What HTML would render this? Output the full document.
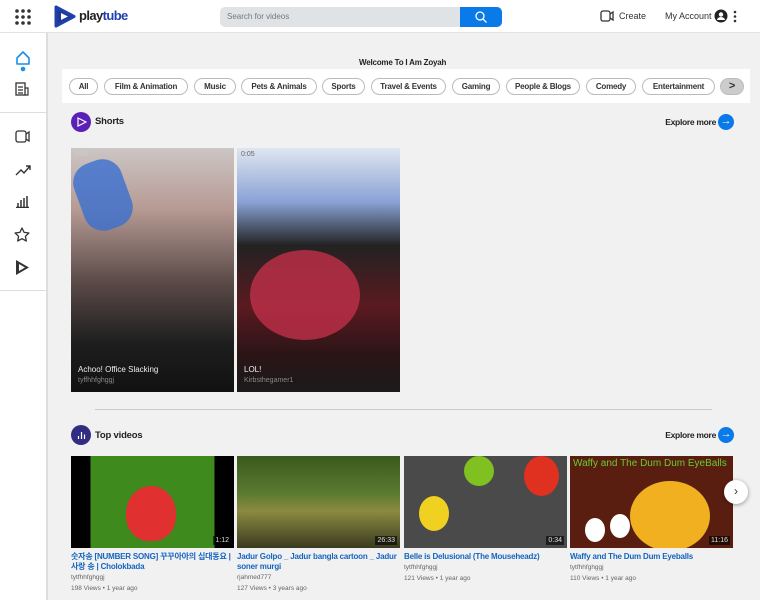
<!DOCTYPE html><html><head><style>
*{margin:0;padding:0;box-sizing:border-box}
body{width:760px;height:600px;overflow:hidden;background:#f1f1f1;font-family:"Liberation Sans","Noto Sans CJK KR",sans-serif;position:relative;color:#222}
.a{position:absolute}
.hdr{left:0;top:0;width:760px;height:33px;background:#fff;border-bottom:1px solid #e2e2e2}
.side{left:0;top:33px;width:48px;height:567px;background:#fff;border-right:2px solid #ddd}
.chip{position:absolute;top:78px;height:17px;border:1px solid #bbb;border-radius:9px;font-size:8px;font-weight:bold;line-height:15px;text-align:center;background:#fff;letter-spacing:-.2px;color:#333}
.t{font-size:8px;font-weight:bold;color:#1565c0;line-height:10px;letter-spacing:-.2px}
.s{font-size:6.5px;color:#666;line-height:11px}
.dur{position:absolute;right:3px;bottom:3px;background:rgba(0,0,0,.6);color:#ddd;font-size:7px;padding:1px 2px}
.ex{position:absolute;width:62px;text-align:right;font-size:8.5px;font-weight:bold;letter-spacing:-.3px;left:654px}
</style></head><body>
<div class="a hdr"></div>
<svg class="a" style="left:15px;top:9px" width="16" height="16"><g fill="#333"><circle cx="2" cy="2" r="1.8"/><circle cx="8" cy="2" r="1.8"/><circle cx="14" cy="2" r="1.8"/><circle cx="2" cy="8" r="1.8"/><circle cx="8" cy="8" r="1.8"/><circle cx="14" cy="8" r="1.8"/><circle cx="2" cy="14" r="1.8"/><circle cx="8" cy="14" r="1.8"/><circle cx="14" cy="14" r="1.8"/></g></svg>
<svg class="a" style="left:54px;top:5px" width="22" height="23"><path d="M2 2 L20 11.5 L2 21Z" fill="#1e3a8a" stroke="#1e40af" stroke-width="3" stroke-linejoin="round"/><path d="M7 8 L14 11.5 L7 15Z" fill="#fff"/></svg>
<div class="a" style="left:79px;top:8px;font-size:13px;font-weight:bold;color:#222;letter-spacing:-.6px">play<span style="color:#1e40af">tube</span></div>
<div class="a" style="left:220px;top:7px;width:240px;height:20px;background:#dfe3e6;border-radius:5px 0 0 5px;font-size:8px;color:#777;line-height:20px;padding-left:7px">Search for videos</div>
<div class="a" style="left:460px;top:7px;width:42px;height:20px;background:#0a7ae8;border-radius:0 5px 5px 0"></div>
<svg class="a" style="left:474px;top:10px" width="14" height="14"><circle cx="6" cy="6" r="4" fill="none" stroke="#fff" stroke-width="1.3"/><path d="M9 9l3.5 3.5" stroke="#fff" stroke-width="1.3"/></svg>
<svg class="a" style="left:600px;top:10px" width="15" height="12"><rect x="1" y="1" width="9" height="10" rx="2" fill="none" stroke="#333" stroke-width="1.3"/><path d="M10 4l3-2v8l-3-2" fill="none" stroke="#333" stroke-width="1.3"/></svg>
<div class="a" style="left:619px;top:11px;font-size:9px;color:#333">Create</div>
<div class="a" style="left:665px;top:11px;font-size:9px;color:#333">My Account</div>
<svg class="a" style="left:714px;top:9px" width="14" height="14"><circle cx="7" cy="7" r="6.5" fill="#222"/><circle cx="7" cy="5.5" r="2.2" fill="#fff"/><path d="M3 11a4 3 0 0 1 8 0" fill="#fff"/></svg>
<svg class="a" style="left:733px;top:10px" width="4" height="13"><g fill="#333"><circle cx="2" cy="2" r="1.3"/><circle cx="2" cy="6.5" r="1.3"/><circle cx="2" cy="11" r="1.3"/></g></svg>
<div class="a side"></div>
<div class="a" style="left:0;top:290px;width:48px;height:1px;background:#ddd"></div>
<div class="a" style="left:0;top:112px;width:48px;height:1px;background:#ddd"></div>
<svg class="a" style="left:14px;top:50px" width="18" height="22"><path d="M3 8 L9 2 L15 8 V14 H3Z" fill="none" stroke="#1a8fe8" stroke-width="1.6" stroke-linejoin="round"/><circle cx="9" cy="19" r="2.3" fill="#1a8fe8"/></svg>
<svg class="a" style="left:15px;top:82px" width="15" height="15"><rect x="1" y="1" width="9" height="12" fill="none" stroke="#333" stroke-width="1.3"/><path d="M10 6h3v7h-3M3 5h5M3 8h5M3 11h5" stroke="#333" stroke-width="1.2" fill="none"/></svg>
<svg class="a" style="left:15px;top:130px" width="16" height="13"><rect x="1" y="1" width="10" height="11" rx="2" fill="none" stroke="#333" stroke-width="1.3"/><path d="M11 4l3-2v9l-3-2" fill="none" stroke="#333" stroke-width="1.3"/></svg>
<svg class="a" style="left:15px;top:164px" width="16" height="12"><path d="M1 11l5-5 3 3 6-7M11 2h4v4" fill="none" stroke="#333" stroke-width="1.4"/></svg>
<svg class="a" style="left:16px;top:195px" width="13" height="13"><path d="M2 12V8M5 12V5M8 12V3M11 12V1M0 12.5h13" stroke="#333" stroke-width="1.5"/></svg>
<svg class="a" style="left:14px;top:227px" width="16" height="15"><path d="M8 1l2.1 4.4 4.8.6-3.5 3.3.9 4.7L8 11.7 3.7 14l.9-4.7L1.1 6l4.8-.6z" fill="none" stroke="#333" stroke-width="1.3" stroke-linejoin="round"/></svg>
<svg class="a" style="left:15px;top:259px" width="15" height="17"><path d="M1 1L14 8.5 1 16Z" fill="#333"/><path d="M4 5l6 3.5-6 3.5z" fill="#fff"/></svg>
<div class="a" style="left:359px;top:58px;font-size:8px;font-weight:bold;letter-spacing:-.2px">Welcome To I Am Zoyah</div>
<div class="a" style="left:62px;top:69px;width:688px;height:34px;background:#fff"></div>
<div class="chip" style="left:69px;width:29px">All</div>
<div class="chip" style="left:104px;width:84px">Film &amp; Animation</div>
<div class="chip" style="left:194px;width:42px">Music</div>
<div class="chip" style="left:241px;width:76px">Pets &amp; Animals</div>
<div class="chip" style="left:322px;width:43px">Sports</div>
<div class="chip" style="left:371px;width:75px">Travel &amp; Events</div>
<div class="chip" style="left:452px;width:48px">Gaming</div>
<div class="chip" style="left:506px;width:74px">People &amp; Blogs</div>
<div class="chip" style="left:586px;width:50px">Comedy</div>
<div class="chip" style="left:642px;width:73px">Entertainment</div>
<div class="chip" style="left:720px;width:24px;background:#ccc;font-size:11px">&gt;</div>
<div class="a" style="left:71px;top:112px;width:20px;height:20px;border-radius:50%;background:#5b21b6"></div>
<svg class="a" style="left:77px;top:117px" width="10" height="10"><path d="M1 1l8 4-8 4z" fill="none" stroke="#fff" stroke-width="1.2"/></svg>
<div class="a" style="left:95px;top:116px;font-size:9.5px;font-weight:bold;letter-spacing:-.2px">Shorts</div>
<div class="ex" style="top:117px">Explore more</div>
<div class="a" style="left:718px;top:114px;width:16px;height:16px;border-radius:50%;background:#0a7ae8;color:#fff;font-size:11px;text-align:center;line-height:15px">→</div>
<div class="a" style="left:71px;top:148px;width:163px;height:244px;background:linear-gradient(180deg,#ccc6c4 0%,#b79a94 25%,#5a4a48 55%,#1e1e1e 80%,#111 100%)"></div>
<div class="a" style="left:78px;top:160px;width:50px;height:70px;background:#3a6fd0;border-radius:20px;transform:rotate(-20deg);opacity:.8"></div>
<div class="a" style="left:237px;top:148px;width:163px;height:244px;background:linear-gradient(180deg,#dfe6f0 0%,#8aa2d6 22%,#222 40%,#5a1a20 65%,#2a1416 85%,#1a1a1a 100%)"></div>
<div class="a" style="left:250px;top:250px;width:110px;height:90px;background:#c0304a;border-radius:50%;opacity:.8"></div>
<div class="a" style="left:75px;top:151px;font-size:7px;color:#ccc">0:09</div>
<div class="a" style="left:241px;top:151px;font-size:7px;color:#666">0:05</div>
<div class="a" style="left:78px;top:365px;font-size:8px;color:#eee">Achoo! Office Slacking</div>
<div class="a" style="left:78px;top:377px;font-size:7px;color:#888">tyffhhfghggj</div>
<div class="a" style="left:244px;top:365px;font-size:8px;color:#eee">LOL!</div>
<div class="a" style="left:244px;top:377px;font-size:7px;color:#888">Kirbsthegamer1</div>
<div class="a" style="left:95px;top:409px;width:617px;height:1px;background:#ccc"></div>
<div class="a" style="left:71px;top:425px;width:20px;height:20px;border-radius:50%;background:#312e81"></div>
<svg class="a" style="left:77px;top:430px" width="9" height="10"><path d="M1.5 9V6M4.5 9V2M7.5 9V4.5" stroke="#fff" stroke-width="1.2"/></svg>
<div class="a" style="left:95px;top:430px;font-size:9.5px;font-weight:bold;letter-spacing:-.2px">Top videos</div>
<div class="ex" style="top:430px">Explore more</div>
<div class="a" style="left:718px;top:427px;width:16px;height:16px;border-radius:50%;background:#0a7ae8;color:#fff;font-size:11px;text-align:center;line-height:15px">→</div>
<div class="a" style="left:71px;top:456px;width:163px;height:92px;background:linear-gradient(90deg,#000 0 12%,#3e8a1c 12% 88%,#000 88%)"><div class="a" style="left:55px;top:30px;width:50px;height:55px;background:#e03030;border-radius:50% 50% 45% 45%"></div><div class="dur">1:12</div></div>
<div class="a" style="left:237px;top:456px;width:163px;height:92px;background:linear-gradient(180deg,#3a5a1e 0%,#5a7a30 40%,#8a8a40 60%,#3a3a20 100%)"><div class="dur">26:33</div></div>
<div class="a" style="left:404px;top:456px;width:163px;height:92px;background:#4a4a4a"><div class="a" style="left:15px;top:40px;width:30px;height:35px;background:#f0d020;border-radius:50%"></div><div class="a" style="left:120px;top:0;width:35px;height:40px;background:#e03020;border-radius:50%"></div><div class="a" style="left:60px;top:0;width:30px;height:30px;background:#80c020;border-radius:50%"></div><div class="dur">0:34</div></div>
<div class="a" style="left:570px;top:456px;width:163px;height:92px;background:#5a1e10;overflow:hidden"><div class="a" style="left:60px;top:25px;width:80px;height:70px;background:#f0b020;border-radius:50%"></div><div class="a" style="left:15px;top:62px;width:20px;height:24px;background:#fff;border-radius:50%"></div><div class="a" style="left:40px;top:58px;width:20px;height:24px;background:#fff;border-radius:50%"></div><div class="a" style="left:3px;top:2px;font-size:10px;color:#6c3;white-space:nowrap">Waffy and The Dum Dum EyeBalls</div><div class="dur">11:16</div></div>
<div class="a" style="left:724px;top:480px;width:24px;height:24px;border-radius:50%;background:#fff;box-shadow:0 1px 4px rgba(0,0,0,.4);text-align:center;line-height:22px;font-size:12px;color:#333">›</div>
<div class="a" style="left:71px;top:552px;width:165px"><div class="t">숫자송 [NUMBER SONG] 꾸꾸아아의 십대동요 | 사랑 송 | Cholokbada</div><div class="s">tytfhhfghggj</div><div class="s">198 Views • 1 year ago</div></div>
<div class="a" style="left:237px;top:552px;width:165px"><div class="t">Jadur Golpo _ Jadur bangla cartoon _ Jadur soner murgi</div><div class="s">rjahmed777</div><div class="s">127 Views • 3 years ago</div></div>
<div class="a" style="left:404px;top:552px;width:165px"><div class="t">Belle is Delusional (The Mouseheadz)</div><div class="s">tytfhhfghggj</div><div class="s">121 Views • 1 year ago</div></div>
<div class="a" style="left:570px;top:552px;width:165px"><div class="t">Waffy and The Dum Dum Eyeballs</div><div class="s">tytfhhfghggj</div><div class="s">110 Views • 1 year ago</div></div>
</body></html>
